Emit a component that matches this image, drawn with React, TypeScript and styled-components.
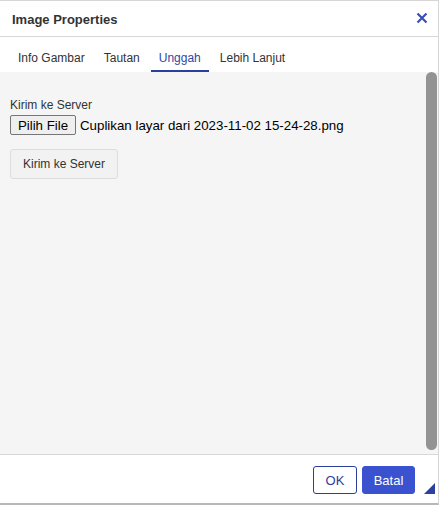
import React from "react";
import styled, { createGlobalStyle } from "styled-components";

const Global = createGlobalStyle`
  html, body { margin: 0; padding: 0; background: #fff; }
  body { font-family: "Liberation Sans", Arial, sans-serif; }
`;

const Dialog = styled.div`
  width: 438px;
  height: 502px;
  border: 1px solid #d6d6d6;
  border-bottom: 2px solid #b8b8b8;
  border-left: none;
  background: #fff;
  display: flex;
  flex-direction: column;
  box-sizing: content-box;
`;

const TitleBar = styled.div`
  height: 35px;
  border-bottom: 1px solid #d8d8d8;
  display: flex;
  align-items: center;
  justify-content: space-between;
  padding: 0 9px 0 12px;
`;

const Title = styled.div`
  font-size: 13px;
  font-weight: bold;
  color: #333;
  margin-top: 1px;
`;

const Close = styled.button`
  border: none;
  background: none;
  padding: 0;
  width: 14px;
  height: 14px;
  display: flex;
  align-items: center;
  justify-content: center;
  cursor: pointer;
  margin-top: -2px;
`;

const Tabs = styled.div`
  display: flex;
  gap: 3px;
  padding: 11px 10px 0;
  height: 24px;
`;

const Tab = styled.div<{ $active?: boolean }>`
  font-size: 12px;
  padding: 3px 8px 0;
  height: 19px;
  color: ${(p) => (p.$active ? "#2f47a8" : "#333")};
  border-bottom: 2px solid ${(p) => (p.$active ? "#2b3f9f" : "transparent")};
`;

const Body = styled.div`
  flex: 1;
  background: #f5f5f5;
  display: flex;
  position: relative;
`;

const Content = styled.div`
  flex: 1;
  padding: 27px 10px 0;
  display: flex;
  flex-direction: column;
  align-items: flex-start;
`;

const Label = styled.div`
  font-size: 12px;
  color: #333;
  line-height: 13px;
  margin-bottom: 3px;
`;

const FileRow = styled.div`
  display: flex;
  align-items: center;
  gap: 4px;
`;

const FileButton = styled.button`
  font-family: "Liberation Sans", Arial, sans-serif;
  font-size: 13.3px;
  height: 20px;
  width: 66px;
  padding: 0;
  border: 1px solid #767676;
  border-radius: 2px;
  background: #efefef;
  color: #000;
`;

const FileName = styled.span`
  font-size: 13.3px;
  color: #000;
`;

const SendButton = styled.button`
  margin-top: 14px;
  font-family: "Liberation Sans", Arial, sans-serif;
  font-size: 12px;
  color: #333;
  height: 30px;
  width: 108px;
  border: 1px solid #ddd;
  border-radius: 3px;
  background: #f2f2f2;
`;

const Scrollbar = styled.div`
  width: 11px;
  margin: 0 1px 4px 0;
  background: #939393;
  border-radius: 6px;
`;

const Footer = styled.div`
  height: 48px;
  border-top: 1px solid #d8d8d8;
  display: flex;
  align-items: center;
  justify-content: flex-end;
  gap: 5px;
  padding: 0 23px 0 0;
  position: relative;
`;

const FooterButton = styled.button<{ $primary?: boolean }>`
  font-family: "Liberation Sans", Arial, sans-serif;
  font-size: 13px;
  height: 28px;
  margin-top: 2px;
  border-radius: 3px;
  padding: 0;
  width: ${(p) => (p.$primary ? "53px" : "44px")};
  border: 1px solid ${(p) => (p.$primary ? "#3a52d0" : "#2b3e9a")};
  background: ${(p) => (p.$primary ? "#3a52d0" : "#fff")};
  color: ${(p) => (p.$primary ? "#fff" : "#2b3e9a")};
`;

const Resize = styled.div`
  position: absolute;
  right: 3px;
  bottom: 9px;
  width: 0;
  height: 0;
  border-left: 11px solid transparent;
  border-bottom: 11px solid #2b3f9f;
`;

export default function App() {
  return (
    <>
      <Global />
      <Dialog>
        <TitleBar>
          <Title>Image Properties</Title>
          <Close aria-label="close">
            <svg width="12" height="12" viewBox="0 0 12 12">
              <path d="M1.5 1.5 L10.5 10.5 M10.5 1.5 L1.5 10.5" stroke="#3a4fb5" strokeWidth="2.2" />
            </svg>
          </Close>
        </TitleBar>
        <Tabs>
          <Tab>Info Gambar</Tab>
          <Tab>Tautan</Tab>
          <Tab $active>Unggah</Tab>
          <Tab>Lebih Lanjut</Tab>
        </Tabs>
        <Body>
          <Content>
            <Label>Kirim ke Server</Label>
            <FileRow>
              <FileButton>Pilih File</FileButton>
              <FileName>Cuplikan layar dari 2023-11-02 15-24-28.png</FileName>
            </FileRow>
            <SendButton>Kirim ke Server</SendButton>
          </Content>
          <Scrollbar />
        </Body>
        <Footer>
          <FooterButton>OK</FooterButton>
          <FooterButton $primary>Batal</FooterButton>
          <Resize />
        </Footer>
      </Dialog>
    </>
  );
}
